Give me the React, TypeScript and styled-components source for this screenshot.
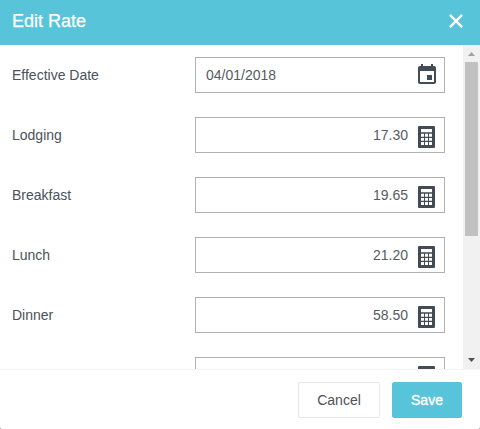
import React from "react";
import styled, { createGlobalStyle } from "styled-components";

const GlobalStyle = createGlobalStyle`
  *, *::before, *::after { box-sizing: border-box; }
  html, body { margin: 0; padding: 0; background: #8c8c8c; overflow: hidden; }
  body, input, button { font-family: "Liberation Sans", Arial, sans-serif; }
`;

const Dialog = styled.section`
  display: flex;
  flex-direction: column;
  width: 480px;
  height: 429px;
  background: #fff;
  border-radius: 0 0 2px 2px;
  color: #4b5259;
  overflow: hidden;
`;

const Header = styled.header`
  display: flex;
  flex: none;
  align-items: center;
  justify-content: space-between;
  height: 45px;
  padding: 0 17px 3px 12px;
  background: #58c4d9;
  color: #fff;
`;

const Title = styled.h1`
  margin: 0;
  font-size: 18px;
  font-weight: 400;
  line-height: 24px;
  -webkit-text-stroke: 0.25px #fff;
`;

const CloseButton = styled.button`
  display: flex;
  padding: 0;
  border: 0;
  background: none;
  color: inherit;
`;

const Body = styled.div`
  display: flex;
  flex: none;
  height: 324px;
  overflow: hidden;
`;

const Form = styled.form`
  display: flex;
  flex: 1;
  flex-direction: column;
  gap: 24px;
  padding: 12px 18px 0 12px;
`;

const Row = styled.label`
  display: flex;
  flex: none;
  align-items: center;
  justify-content: space-between;
  height: 36px;
`;

const Label = styled.span`
  font-size: 14px;
  line-height: 20px;
`;

const Field = styled.span`
  display: flex;
  align-items: center;
  width: 250px;
  height: 36px;
  padding-right: 5px;
  border: 1px solid #afb2b5;
`;

const Input = styled.input<{ $numeric?: boolean }>`
  flex: 1;
  min-width: 0;
  height: 34px;
  padding: ${(p) => (p.$numeric ? "0 7px 0 10px" : "0 10px")};
  border: 0;
  outline: 0;
  background: transparent;
  color: #555b61;
  font-size: 14px;
  text-align: ${(p) => (p.$numeric ? "right" : "left")};
`;

const Icon = styled.svg`
  display: block;
  flex: none;
  fill: #434b54;
`;

const LoweredIcon = styled(Icon)`
  margin-top: 4px;
`;

const ScrollTrack = styled.div`
  display: flex;
  flex: none;
  flex-direction: column;
  align-items: center;
  width: 17px;
  background: #f1f1f1;
`;

const ScrollThumb = styled.div`
  width: 13px;
  height: 174px;
  margin-bottom: auto;
  background: #c1c1c1;
`;

const Footer = styled.footer`
  display: flex;
  flex: 1;
  gap: 12px;
  justify-content: flex-end;
  padding: 12px 18px 0 12px;
  border-top: 1px solid #f4f4f4;
`;

const Button = styled.button<{ $primary?: boolean }>`
  width: ${(p) => (p.$primary ? 70 : 82)}px;
  height: 36px;
  padding: 0;
  border: 1px solid ${(p) => (p.$primary ? "#58c4d9" : "#e6e7e8")};
  border-radius: 2px;
  background: ${(p) => (p.$primary ? "#58c4d9" : "#fff")};
  color: ${(p) => (p.$primary ? "#fff" : "#4b5259")};
  font-size: 14px;
  -webkit-text-stroke: ${(p) => (p.$primary ? "0.35px #fff" : "0")};
`;

const CalendarIcon = () => (
  <Icon width="24" height="24" viewBox="0 0 24 24">
    <path d="M17 12h-5v5h5v-5zM16 1v2H8V1H6v2H5c-1.110 0-1.990.9-1.990 2L3 19c0 1.100.890 2 2 2h14c1.100 0 2-.9 2-2V5c0-1.100-.9-2-2-2h-1V1h-2zm3 18H5V8h14v11z" />
  </Icon>
);

const CalculatorIcon = () => (
  <LoweredIcon width="24" height="24" viewBox="0 0 24 24">
    <path
      fillRule="evenodd"
      d="M4 1h15a1 1 0 0 1 1 1v20a1 1 0 0 1-1 1h-15a1 1 0 0 1-1-1v-20a1 1 0 0 1 1-1zM6 4v3.200h11V4zM6 8.800v2.900h3V8.800zM10 8.800v2.900h3V8.800zM14 8.800v2.900h3V8.800zM6 12.900v2.900h3v-2.900zM10 12.900v2.900h3v-2.900zM14 12.900v2.900h3v-2.900zM6 17v2.900h3V17zM10 17v2.900h3V17zM14 17v2.900h3V17z"
    />
  </LoweredIcon>
);

const rates = [
  { label: "Lodging", value: "17.30" },
  { label: "Breakfast", value: "19.65" },
  { label: "Lunch", value: "21.20" },
  { label: "Dinner", value: "58.50" },
  { label: "", value: "" },
];

export default function App() {
  return (
    <>
      <GlobalStyle />
      <Dialog>
        <Header>
          <Title>Edit Rate</Title>
          <CloseButton aria-label="Close">
            <svg width="14" height="14" viewBox="0 0 14 14" fill="none" stroke="currentColor" strokeWidth="2.4">
              <path d="M.9.9l12.200 12.200M13.100.9L.9 13.100" />
            </svg>
          </CloseButton>
        </Header>
        <Body>
          <Form>
            <Row>
              <Label>Effective Date</Label>
              <Field>
                <Input defaultValue="04/01/2018" />
                <CalendarIcon />
              </Field>
            </Row>
            {rates.map((rate, i) => (
              <Row key={i}>
                <Label>{rate.label}</Label>
                <Field>
                  <Input $numeric defaultValue={rate.value} />
                  <CalculatorIcon />
                </Field>
              </Row>
            ))}
          </Form>
          <ScrollTrack>
            <svg width="17" height="17" viewBox="0 0 17 17" fill="#a3a3a3">
              <path d="M5 11l3.500-4 3.500 4z" />
            </svg>
            <ScrollThumb />
            <svg width="17" height="17" viewBox="0 0 17 17" fill="#505050">
              <path d="M5 6l3.500 4L12 6z" />
            </svg>
          </ScrollTrack>
        </Body>
        <Footer>
          <Button>Cancel</Button>
          <Button $primary>Save</Button>
        </Footer>
      </Dialog>
    </>
  );
}
